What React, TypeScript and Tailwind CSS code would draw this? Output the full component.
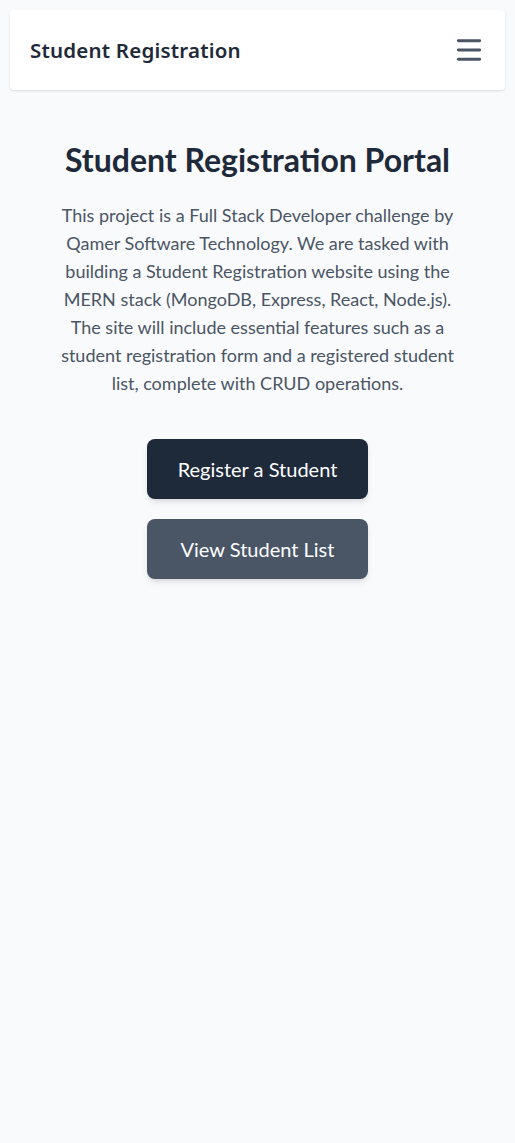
import { Menu } from "lucide-react";

export default function App() {
  return (
    <div className="min-h-[1143px] bg-gray-50 font-['Lato',sans-serif]">
      {/* top bar */}
      <div className="p-[10px]">
        <header className="flex h-20 items-center justify-between rounded bg-white px-5 shadow-sm">
          <h1 className="font-['Noto_Sans',sans-serif] text-[20.5px] font-semibold tracking-[0.2px] text-gray-800">Student Registration</h1>
          <button className="text-gray-600">
            <Menu className="h-8 w-8" strokeWidth={2.2} />
          </button>
        </header>
      </div>

      <main className="flex flex-col items-center px-[50px] pt-[42px] text-center">
        <h2 className="text-[32px] leading-9 font-bold text-gray-800">Student Registration Portal</h2>
        <p className="mt-[23px] max-w-[400px] text-[18px] leading-7 text-gray-600">
          This project is a Full Stack Developer challenge by Qamer Software Technology. We are tasked with
          building a Student Registration website using the MERN stack (MongoDB, Express, React, Node.js).
          The site will include essential features such as a student registration form and a registered student
          list, complete with CRUD operations.
        </p>
        <div className="mt-[42px] flex w-[221px] flex-col gap-5">
          <button className="h-[60px] rounded-lg bg-gray-800 text-xl text-white shadow-md">Register a Student</button>
          <button className="h-[60px] rounded-lg bg-gray-600 text-xl text-white shadow-md">View Student List</button>
        </div>
      </main>
    </div>
  );
}
